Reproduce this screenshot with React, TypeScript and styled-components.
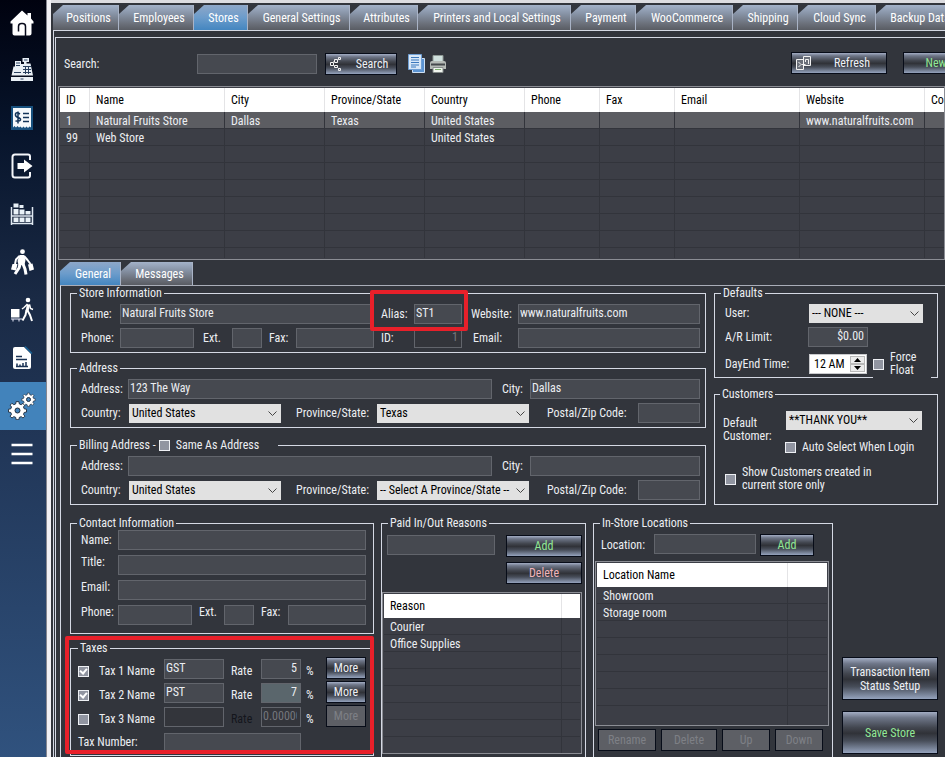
import React from "react";
import styled, { createGlobalStyle, css } from "styled-components";

const BG = "#32353c";
const FIELD = "#464950";
const FIELD_LINE = "#62656c";
const LINE = "#d5d9e4";
const LIST = "#3c3e46";
const LIST_LINE = "#32343b";
const TEXT = "#eceef2";
const FONT = '"Roboto Condensed", Roboto, "Liberation Sans", sans-serif';

const GlobalStyle = createGlobalStyle`
  * { box-sizing: border-box; }
  body { margin: 0; background: ${BG}; color: ${TEXT}; font: 12px/14px ${FONT}; overflow: hidden; }
  button, input, select { font: inherit; color: inherit; margin: 0; }
`;

/* ---------- shell ---------- */

const Page = styled.div`
  display: flex;
  height: 100vh;
  overflow: hidden;
`;

const Sidebar = styled.nav`
  flex: 0 0 51px;
  display: flex;
  flex-direction: column;
  background: linear-gradient(#00020f 0, #07142b 130px, #1a2a45 300px, #22385a 460px, #30527e 757px);
  border-right: 4px solid #f1f0f4;
  box-shadow: inset -1px 0 #85868f;
`;

const SideLink = styled.a<{ $active?: boolean; $first?: boolean }>`
  height: ${(p) => (p.$first ? 46 : 48)}px;
  width: 46px;
  padding-right: 2px;
  display: flex;
  align-items: center;
  justify-content: center;
  background: ${(p) => (p.$active ? "#4283bb" : "transparent")};
`;

const Main = styled.main`
  flex: 1;
  min-width: 0;
  display: flex;
  flex-direction: column;
  overflow: hidden;
  border-top: 3px solid #dcdce0;
  padding: 2px 0 0 2px;
`;

const TabBar = styled.div<{ $inner?: boolean }>`
  display: flex;
  flex: none;
  height: ${(p) => (p.$inner ? 23 : 25)}px;
  margin: ${(p) => (p.$inner ? "2px 0 0 4px" : "0")};
`;

const Tab = styled.button<{ $w: number; $active?: boolean }>`
  flex: 0 0 ${(p) => p.$w}px;
  min-width: 0;
  border: 0;
  border-right: 1px solid #a9b3c6;
  padding: 0 0 0 6px;
  color: #fff;
  white-space: nowrap;
  background: ${(p) =>
    p.$active
      ? "linear-gradient(#8ea7c8, #6c9ccb 50%, #4486c0)"
      : "linear-gradient(#a3b2c9, #8793a6 35%, #6b707a 75%, #595c63)"};
  clip-path: polygon(0 9px, 10px 0, 100% 0, 100% 100%, 0 100%);
`;

const OuterFrame = styled.div`
  flex: 1;
  border-left: 1px solid ${LINE};
  border-top: 1px solid ${LINE};
  padding: 6px 0 0 1px;
`;

const InnerFrame = styled.div`
  height: 100%;
  border-left: 1px solid ${LINE};
  border-top: 1px solid ${LINE};
`;

const Toolbar = styled.div`
  height: 48px;
  padding: 4px 0 0 8px;
  display: flex;
  align-items: center;
  > * {
    flex: none;
  }
`;

const ToolbarLabel = styled.label`
  width: 133px;
`;

const ToolGroup = styled.div<{ $gap: number }>`
  display: flex;
  align-items: center;
  margin-left: ${(p) => p.$gap}px;
`;

const IconButton = styled.button`
  border: 0;
  padding: 0;
  background: none;
  display: flex;
  margin-right: 4px;
`;

const RightTools = styled.div`
  display: flex;
  gap: 16px;
  margin: 0 0 2px 340px;
`;

/* ---------- controls ---------- */

const tones = { plain: "#eef0f5", green: "#92e896", red: "#f0b4ba" };

const Button = styled.button<{ $w?: number; $h?: number; $tone?: keyof typeof tones }>`
  flex: none;
  width: ${(p) => (p.$w ? p.$w + "px" : "100%")};
  height: ${(p) => p.$h ?? 22}px;
  padding: 0;
  display: flex;
  align-items: center;
  justify-content: center;
  border: 1px solid #070c18;
  color: ${(p) => tones[p.$tone ?? "plain"]};
  background: linear-gradient(#a3adc4 0, #6e7688 14%, #42464f 38%, #303238 52%, #474d59 70%, #95a3bd 100%);
  &:disabled {
    color: #7e8086;
    background: #5d5f65;
  }
`;

const ButtonIconText = styled.span`
  flex: 1;
  text-align: center;
  padding-left: 6px;
`;

const IconSlot = styled.span`
  display: flex;
  padding-left: 4px;
`;

const Field = styled.input<{ $w?: number; $align?: string; $hot?: boolean }>`
  width: ${(p) => (p.$w ? p.$w + "px" : "100%")};
  min-width: 0;
  height: 20px;
  padding: 0 3px 2px 1px;
  border: 1px solid ${FIELD_LINE};
  border-radius: 0;
  outline: 0;
  background: ${(p) => (p.$hot ? "#5a666c" : FIELD)};
  text-align: ${(p) => p.$align ?? "left"};
  &:disabled {
    background: #33353b;
    color: #75777d;
  }
`;

const SelectWrap = styled.span`
  position: relative;
  display: block;
  height: 19px;
  margin-left: 1px;
  svg {
    position: absolute;
    right: 4px;
    top: 6px;
    pointer-events: none;
  }
`;

const NativeSelect = styled.select`
  appearance: none;
  width: 100%;
  height: 19px;
  border: 0;
  border-radius: 0;
  padding: 0 14px 0 3px;
  background: #e1e1e1;
  color: #000;
`;

const Tick = styled.input`
  appearance: none;
  flex: none;
  width: 11px;
  height: 11px;
  border: 1px solid #eef0f4;
  background: #9195a1;
  &:checked::after {
    content: "";
    display: block;
    box-sizing: border-box;
    width: 5px;
    height: 7px;
    margin: 0 0 0 2px;
    border: solid #fff;
    border-width: 0 2px 2px 0;
    rotate: 40deg;
  }
`;

const TickLabel = styled.label<{ $gap?: number }>`
  display: inline-flex;
  align-items: center;
  gap: ${(p) => p.$gap ?? 6}px;
  line-height: 13px;
  white-space: nowrap;
`;

/* ---------- groups ---------- */

const Pane = styled.div`
  margin-left: 4px;
  border-left: 1px solid ${LINE};
  border-top: 1px solid #a9adb8;
  padding: 0 7px 0 9px;
`;

const Upper = styled.div`
  display: grid;
  grid-template-columns: minmax(0, 636fr) minmax(0, 224fr);
  gap: 8px;
  align-items: start;
`;

const Lower = styled.div`
  display: grid;
  grid-template-columns: minmax(0, 304fr) minmax(0, 205fr) minmax(0, 240fr) minmax(0, 98fr);
  gap: 7px;
  margin-top: 11px;
`;

const Stack = styled.div<{ $gap: number }>`
  display: flex;
  flex-direction: column;
  gap: ${(p) => p.$gap}px;
`;

const Group = styled.fieldset<{ $pad: string; $top?: number }>`
  position: relative;
  min-width: 0;
  margin: ${(p) => p.$top ?? 0}px 0 0;
  border: 1px solid ${LINE};
  padding: ${(p) => p.$pad};
`;

const Legend = styled.legend<{ $w?: number; $in?: number }>`
  height: 14px;
  margin-left: ${(p) => -(p.$in ?? 4)}px;
  width: ${(p) => (p.$w ? p.$w + "px" : "auto")};
  padding: 0 2px;
  display: flex;
  align-items: center;
  gap: 3px;
  white-space: nowrap;
`;

const Row = styled.div<{ $cols: string; $align?: string; $h?: number }>`
  display: grid;
  grid-template-columns: ${(p) => p.$cols};
  align-items: ${(p) => p.$align ?? "center"};
  min-height: ${(p) => p.$h ?? 20}px;
  & + & {
    margin-top: 4px;
  }
`;

const DayRow = styled(Row)`
  && {
    margin-top: 3px;
  }
`;

const LocationRow = styled(Row)`
  padding: 0 15px 0 6px;
  > label {
    padding-top: 4px;
  }
`;

const ContactRows = styled.div`
  display: grid;
  gap: 5px;
  ${Row} {
    margin-top: 0;
  }
`;

const Label = styled.label<{ $in?: number; $dim?: boolean }>`
  padding-left: ${(p) => p.$in ?? 0}px;
  white-space: nowrap;
  color: ${(p) => (p.$dim ? "#14161c" : "inherit")};
`;

const Highlight = styled.div<{ $box: string; $w?: number }>`
  position: absolute;
  inset: ${(p) => p.$box};
  width: ${(p) => (p.$w ? p.$w + "px" : "auto")};
  border: 4px solid #e8202a;
  border-radius: 2px;
  pointer-events: none;
`;

const TaxRow = styled.div`
  display: grid;
  grid-template-columns: 86px 60px 37px 40px 25px 40px;
  align-items: end;
  height: 22px;
  margin-bottom: 2px;
  > label, > span {
    padding-bottom: 1px;
  }
`;

const TaxNumberRow = styled(TaxRow)`
  grid-template-columns: 86px 137px;
  margin: 4px 0 0;
  > label {
    padding-bottom: 4px;
  }
`;

const Percent = styled.span`
  padding-left: 5px;
`;

const TimeBox = styled.span`
  display: flex;
  height: 20px;
  margin-left: 1px;
  background: #fff;
  color: #000;
  border: 1px solid #c9cacd;
`;

const TimeInput = styled.input`
  width: 40px;
  border: 0;
  outline: 0;
  background: none;
  padding: 0 0 0 4px;
`;

const Spinner = styled.span`
  display: grid;
  grid-template-rows: 1fr 1fr;
  width: 15px;
  margin: 1px 0;
`;

const SpinButton = styled.button`
  padding: 0;
  border: 1px solid #b9b9b9;
  background: #ececec;
  display: flex;
  align-items: center;
  justify-content: center;
`;

const ForceFloat = styled(TickLabel)`
  height: 28px;
  margin: 0 0 -1px 6px;
  background: ${BG};
  white-space: normal;
  align-self: start;
`;

const TwoLines = styled.span`
  width: 34px;
`;

const CustomerGrid = styled.div`
  display: grid;
  grid-template-columns: 62px 1fr;
  line-height: 13px;
  > label {
    padding-top: 6px;
  }
`;

const ShowCustomers = styled(TickLabel)`
  margin: 12px 0 12px 2px;
  white-space: normal;
  max-width: 160px;
`;

const ReasonEntry = styled.div`
  display: grid;
  grid-template-columns: 1fr 76px;
  column-gap: 11px;
  row-gap: 5px;
  padding: 0 3px 0 5px;
  > :last-child {
    grid-column: 2;
  }
`;

const ListActions = styled.div`
  display: flex;
  gap: 5px;
  padding: 3px 0 0 3px;
`;

const SideActions = styled.div`
  display: flex;
  flex-direction: column;
  gap: 11px;
  padding: 141px 0 0 2px;
`;

/* ---------- lists ---------- */

const ListBox = styled.div<{ $h: number; $m: string }>`
  height: ${(p) => p.$h}px;
  margin: ${(p) => p.$m};
  border: 1px solid #8b8d94;
  padding: 1px;
  background: ${LIST};
  overflow: hidden;
`;

const cell = css`
  white-space: nowrap;
  text-align: left;
  font-weight: normal;
`;

const List = styled.table<{ $min?: number }>`
  width: ${(p) => (p.$min ? `max(100%, ${p.$min}px)` : "100%")};
  table-layout: fixed;
  border-collapse: separate;
  border-spacing: 0;
  th {
    ${cell}
    height: 24px;
    padding: 0 6px;
    background: #fff;
    color: #000;
    border-right: 1px solid #e4e4e6;
  }
  td {
    ${cell}
    height: 17px;
    padding: 1px 6px 0;
    border-right: 1px solid ${LIST_LINE};
    border-bottom: 1px solid ${LIST_LINE};
  }
  tr > :last-child {
    border-right: 0;
  }
`;

const ListRow = styled.tr<{ $picked?: boolean }>`
  background: ${(p) => (p.$picked ? "#5c5d62" : "transparent")};
`;

const TailRow = styled.tr<{ $h: number }>`
  && td {
    height: ${(p) => p.$h}px;
    border-bottom: 0;
  }
`;

/* ---------- icons ---------- */

const Chevron = () => (
  <svg width="9" height="7" viewBox="0 0 9 7" fill="none" stroke="#444" aria-hidden>
    <path d="M0.5 1.5 L4.5 5.5 L8.5 1.5" />
  </svg>
);

const icons: Record<string, React.ReactNode> = {
  Home: (
    <>
      <path fill="#fff" d="M12 .5 17.500 5.500V3H21V8.500L23.500 11.500V13.500H21.500V23.500Q21.500 25.500 19.500 25.500H4.500Q2.500 25.500 2.500 23.500V13.500H.5V11.500Z" />
      <path d="M8.500 21.500V16.500Q8.500 13.500 11.500 13.500H12.500Q15.500 13.500 15.500 16.500V26" fill="none" stroke="#07091a" strokeWidth="1.500" />
    </>
  ),
  Register: (
    <>
      <path fill="#e9f0f6" d="M12.500 1h6.500v4h-2.500v1.500h4l2.500 12H1.500l2-9h1.500V4h6v3h3V5h-1.500z" />
      <path fill="#e9f0f6" d="M1 20h22v4H1z" />
      <path stroke="#2a4160" fill="none" d="M14 3h3.500M6 6h4M6 8.500h4M13 9.500h8M13 12.500h8M13 15.500h8M15.500 9v8M18.500 9v8M4 15.500h7M10.500 22h3" />
    </>
  ),
  Receipt: (
    <>
      <path fill="#17507e" d="M1 1h22v24H1z" />
      <path fill="#f4f8fb" d="M3 3h18v19.500l-1.500-1-1.500 1.500-1.500-1.500-1.500 1.500-1.500-1.500-1.500 1.500-1.500-1.500L9 22.500 7.500 21 6 22.500 4.500 21 3 22.500z" />
      <path fill="none" stroke="#123459" strokeWidth="1.500" d="M10 9Q6 6.500 5.500 9T8 12.500 10.500 15 5.500 16M8 6.500v12M13 8.500h6M13 12.500h6M13 16.500h6" />
    </>
  ),
  "Sign in": (
    <>
      <path fill="none" stroke="#f4f6fa" strokeWidth="2" d="M20 7V3.500Q20 1.500 18 1.500H5Q2.500 1.500 2.500 4V22Q2.500 24.500 5 24.500H18Q20 24.500 20 22.500V19" />
      <path fill="#fff" d="M7.500 10H14V6.500L22.500 13 14 19.500V16H7.500Z" />
    </>
  ),
  Inventory: (
    <>
      <path fill="none" stroke="#dfe8f1" strokeWidth="1.500" d="M1.500 6V24M22.500 6V24M1 15H23M1 22.500H23" />
      <path fill="#e9f1f8" d="M3.500 2.500h5v4h-5zM9.500 4h4v3h-4zM3.500 8h5v5.500h-5zM9.500 8.500h5v5h-5zM15.500 10h5v3.500h-5zM3.500 16.500h5V21h-5zM9.500 16.500h5V21h-5zM15.500 16.500h5V21h-5z" />
    </>
  ),
  Customers: (
    <>
      <circle cx="12.500" cy="2.700" r="2.400" fill="#fff" />
      <path fill="#fff" d="M9.500 6h4.500l1.500 5-1 5h-6l-1-4z" />
      <path fill="none" stroke="#fff" strokeWidth="2" strokeLinejoin="round" d="M9.500 7 6 10.500 5 15M14 7l3.500 4 3 4" />
      <path fill="none" stroke="#fff" strokeWidth="3" strokeLinejoin="round" d="M10 15.500 9 19 5 25M13 15l2 5 1 5.500" />
      <path fill="#fff" d="M2.500 15h5l-1.500 6.500-5-1zM18 15.500l4.500-1 1.500 6-4.500 1.500z" />
    </>
  ),
  Deliveries: (
    <>
      <circle cx="18" cy="3" r="2.300" fill="#fff" />
      <path fill="none" stroke="#fff" strokeWidth="3" strokeLinejoin="round" d="M18.500 7.500 17 14" />
      <path fill="none" stroke="#fff" strokeWidth="1.500" d="M17.500 7 14 10.500 12 12M19.500 7.500l1 4 2.500 1" />
      <path fill="none" stroke="#fff" strokeWidth="2" strokeLinejoin="round" d="M16.500 13 15.500 18 12.500 23.500M17.500 13.500l2.500 4.500 2 6" />
      <path fill="#fff" d="M1 12h8.500v8.500H1z" />
      <path stroke="#eef" fill="none" d="M1 22h11M3 22v2.500M9 22v2.500" />
    </>
  ),
  Reports: (
    <>
      <path fill="#fff" d="M5 2h9l7 7v13q0 2-2 2H5q-2 0-2-2V4q0-2 2-2z" />
      <path d="M15 1.500 22 8.500" stroke="#1a6396" strokeWidth="1.500" />
      <path fill="none" stroke="#1b3354" strokeWidth="1.500" d="M6 11.500h6M6 14.500h11M6 21.500h12M7 21v-2.500M10 21v-1.500M13 21v-3M16 21v-4" />
    </>
  ),
  Menu: <path stroke="#fff" strokeWidth="2.500" d="M1.500 4h21M1.500 13h21M1.500 22h21" />,
};

const GEAR =
  "M-1.500-8h3l.5 2.500 2 .8 2-1.500 2 2-1.500 2 .8 2 2.500.5v3l-2.500.5-.8 2 1.500 2-2 2-2-1.500-2 .8-.5 2.500h-3l-.5-2.500-2-.8-2 1.500-2-2 1.500-2-.8-2-2.500-.5v-3l2.500-.5.8-2-1.500-2 2-2 2 1.500 2-.8z";

const Gears = () => (
  <svg width="28" height="28" viewBox="0 0 28 28" aria-hidden>
    <g fill="#fff" stroke="#1f2c3c" strokeWidth="1">
      <path transform="translate(9.500 17) scale(.92)" d={GEAR} />
      <path transform="translate(20.500 6.500) scale(.68)" d={GEAR} />
    </g>
    <circle cx="9.500" cy="18.500" r="2.500" fill="#4283bb" stroke="#1f2c3c" />
    <circle cx="20.500" cy="7.500" r="2" fill="#4283bb" stroke="#1f2c3c" />
  </svg>
);

const SideIcon = ({ name }: { name: string }) =>
  name === "Settings" ? (
    <Gears />
  ) : (
    <svg width="24" height="26" viewBox="0 0 24 26" aria-hidden>
      {icons[name]}
    </svg>
  );

const TreeIcon = () => (
  <svg width="12" height="16" viewBox="0 0 12 16" fill="none" stroke="#f2f2f2" aria-hidden>
    <path d="M.5 6.500h3v3h-3zM4.500 3.500h3v3h-3zM8.500 1.500h2v2h-2zM4.500 9.500h3v2h-3zM8.500 12.500h2v2h-2zM3.500 6l1-1M3.500 9.500l1 1M7.500 4.500l1-1M7.500 11.500l1 1" />
  </svg>
);

const RefreshIcon = () => (
  <svg width="16" height="14" viewBox="0 0 16 14" fill="none" stroke="#f2f2f2" aria-hidden>
    <path d="M.5 3.500h7v10h-7zM7.500.5h7v9h-7z" fill="#6a6f79" />
    <path d="M2.500 6 5 8.500 2.500 11M9.500 6V3.500h3V8M5.500 8.500h4" />
  </svg>
);

const CopyIcon = () => (
  <svg width="17" height="20" viewBox="0 0 17 20" aria-hidden>
    <path d="M4.500 4.500h12v14h-12z" fill="#5c94d2" stroke="#cfe0f2" />
    <path d="M.5.5h13v15H.5z" fill="#d7e7f8" stroke="#6f9fd4" />
    <path d="M3 3.500h8M3 6h8M3 8.500h8M3 11h8M3 13h5" stroke="#3b78bd" />
  </svg>
);

const PrinterIcon = () => (
  <svg width="18" height="18" viewBox="0 0 18 18" aria-hidden>
    <path d="M4 .5h10V8H4z" fill="#cfe0dd" stroke="#8f9995" />
    <path d="M1 8q0-2 2-2h12q2 0 2 2v6H1z" fill="#b5bab6" />
    <path d="M2 9.500h14" stroke="#45494c" strokeWidth="2" />
    <path d="M4 12.500h10v5H4z" fill="#f1f5ef" stroke="#868c8b" />
    <path d="M6 14.500h6" stroke="#7bb26d" />
  </svg>
);

/* ---------- composed controls ---------- */

const Select = ({ id, value }: { id: string; value: string }) => (
  <SelectWrap>
    <NativeSelect id={id} defaultValue={value}>
      <option>{value}</option>
    </NativeSelect>
    <Chevron />
  </SelectWrap>
);

type FieldProps = React.ComponentProps<typeof Field> & { id: string; label: string; indent?: number };
const Labeled = ({ id, label, indent, ...rest }: FieldProps) => (
  <>
    <Label htmlFor={id} $in={indent}>{label}</Label>
    <Field id={id} {...rest} />
  </>
);

const times = (n: number) => Array.from({ length: n }, (_, i) => i);

const SmallList = ({ title, rows, blanks, tail, side }: { title: string; rows: string[]; blanks: number; tail: number; side: number }) => (
  <List>
    <colgroup>
      <col />
      <col style={{ width: side }} />
    </colgroup>
    <thead>
      <tr><th>{title}</th><th /></tr>
    </thead>
    <tbody>
      {rows.map((r) => <ListRow key={r}><td>{r}</td><td /></ListRow>)}
      {times(blanks).map((i) => <ListRow key={i}><td /><td /></ListRow>)}
      <TailRow $h={tail}><td /><td /></TailRow>
    </tbody>
  </List>
);

const AddressRows = ({ prefix, address, city, province }: { prefix: string; address?: string; city?: string; province: string }) => (
  <>
    <Row $cols="47px 364fr 38px 170fr">
      <Labeled id={prefix + "addr"} label="Address:" defaultValue={address} />
      <Labeled id={prefix + "city"} label="City:" indent={10} defaultValue={city} />
    </Row>
    <Row $cols="47px 153fr 95px 153fr 109px 62fr">
      <Label htmlFor={prefix + "country"}>Country:</Label>
      <Select id={prefix + "country"} value="United States" />
      <Label htmlFor={prefix + "prov"} $in={15}>Province/State:</Label>
      <Select id={prefix + "prov"} value={province} />
      <Labeled id={prefix + "zip"} label="Postal/Zip Code:" indent={18} />
    </Row>
  </>
);

const TaxLine = ({ n, name, rate, on, hot }: { n: number; name: string; rate: string; on?: boolean; hot?: boolean }) => (
  <TaxRow>
    <TickLabel $gap={10}>
      <Tick type="checkbox" defaultChecked={on} />
      Tax {n} Name
    </TickLabel>
    <Field aria-label={`Tax ${n} name`} defaultValue={name} disabled={!on} />
    <Label htmlFor={`rate${n}`} $in={7} $dim={!on}>Rate</Label>
    <Field id={`rate${n}`} defaultValue={rate} $align="right" $hot={hot} disabled={!on} />
    <Percent>%</Percent>
    <Button disabled={!on}>More</Button>
  </TaxRow>
);

/* ---------- data ---------- */

const tabs: [string, number][] = [
  ["Positions", 66], ["Employees", 75], ["Stores", 54], ["General Settings", 102], ["Attributes", 68],
  ["Printers and Local Settings", 153], ["Payment", 65], ["WooCommerce", 97], ["Shipping", 65],
  ["Cloud Sync", 78], ["Backup Database", 106],
];

const columns: [string, number | undefined][] = [
  ["ID", 30], ["Name", 135], ["City", 100], ["Province/State", 100], ["Country", 100],
  ["Phone", 75], ["Fax", 75], ["Email", 125], ["Website", 125], ["Contact", undefined],
];

const stores = [
  ["1", "Natural Fruits Store", "Dallas", "Texas", "United States", "", "", "", "www.naturalfruits.com", ""],
  ["99", "Web Store", "", "", "United States", "", "", "", "", ""],
];

const sideItems = ["Home", "Register", "Receipt", "Sign in", "Inventory", "Customers", "Deliveries", "Reports", "Settings", "Menu"];

export default function App() {
  return (
    <Page>
      <GlobalStyle />
      <Sidebar aria-label="Main">
        {sideItems.map((name, i) => (
          <SideLink key={name} href="#" aria-label={name} $first={i === 0} $active={name === "Settings"}>
            <SideIcon name={name} />
          </SideLink>
        ))}
      </Sidebar>
      <Main>
        <TabBar>
          {tabs.map(([name, w]) => (
            <Tab key={name} $w={w} $active={name === "Stores"}>{name}</Tab>
          ))}
        </TabBar>
        <OuterFrame>
          <InnerFrame>
            <Toolbar>
              <ToolbarLabel htmlFor="search">Search:</ToolbarLabel>
              <Field id="search" $w={120} />
              <ToolGroup $gap={8}>
                <Button $w={72}>
                  <IconSlot><TreeIcon /></IconSlot>
                  <ButtonIconText>Search</ButtonIconText>
                </Button>
              </ToolGroup>
              <ToolGroup $gap={11}>
                <IconButton aria-label="Copy list"><CopyIcon /></IconButton>
                <IconButton aria-label="Print list"><PrinterIcon /></IconButton>
              </ToolGroup>
              <RightTools>
                <Button $w={96}>
                  <IconSlot><RefreshIcon /></IconSlot>
                  <ButtonIconText>Refresh</ButtonIconText>
                </Button>
                <Button $w={66} $tone="green">New</Button>
              </RightTools>
            </Toolbar>

            <ListBox $h={174} $m="0 0 0 2px">
              <List $min={990}>
                <colgroup>
                  {columns.map(([name, w]) => <col key={name} style={{ width: w }} />)}
                </colgroup>
                <thead>
                  <tr>{columns.map(([name]) => <th key={name}>{name}</th>)}</tr>
                </thead>
                <tbody>
                  {stores.map((row, i) => (
                    <ListRow key={i} $picked={i === 0}>{row.map((v, j) => <td key={j}>{v}</td>)}</ListRow>
                  ))}
                  {times(6).map((i) => <ListRow key={i}>{columns.map(([n]) => <td key={n} />)}</ListRow>)}
                  <TailRow $h={10}>{columns.map(([n]) => <td key={n} />)}</TailRow>
                </tbody>
              </List>
            </ListBox>

            <TabBar $inner>
              <Tab $w={61} $active>General</Tab>
              <Tab $w={72}>Messages</Tab>
            </TabBar>

            <Pane>
              <Upper>
                <div>
                  <Group $pad="4px 5px 4px 10px">
                    <Legend>Store Information</Legend>
                    <Row $cols="39px 1fr 41px 48px 56px 182px">
                      <Labeled id="name" label="Name:" defaultValue="Natural Fruits Store" />
                      <Labeled id="alias" label="Alias:" indent={8} defaultValue="ST1" />
                      <Labeled id="web" label="Website:" indent={9} defaultValue="www.naturalfruits.com" />
                    </Row>
                    <Row $cols="39px 74px 38px 30px 34px 1fr 40px 48px 56px 182px">
                      <Labeled id="phone" label="Phone:" />
                      <Labeled id="ext" label="Ext." indent={9} />
                      <Labeled id="fax" label="Fax:" indent={7} />
                      <Labeled id="sid" label="ID:" indent={7} defaultValue="1" $align="right" disabled />
                      <Labeled id="email" label="Email:" indent={11} />
                    </Row>
                    <Highlight $box="-10px 237px 21px auto" $w={98} />
                  </Group>
                  <Group $pad="4px 5px 4px 10px" $top={8}>
                    <Legend>Address</Legend>
                    <AddressRows prefix="a" address="123 The Way" city="Dallas" province="Texas" />
                  </Group>
                  <Group $pad="4px 5px 4px 10px" $top={10}>
                    <Legend $w={201}>
                      Billing Address -
                      <TickLabel>
                        <Tick type="checkbox" />
                        Same As Address
                      </TickLabel>
                    </Legend>
                    <AddressRows prefix="b" province="-- Select A Province/State --" />
                  </Group>
                </div>
                <div>
                  <Group $pad="3px 6px 0 10px">
                    <Legend>Defaults</Legend>
                    <Row $cols="83px 1fr 8px">
                      <Label htmlFor="user">User:</Label>
                      <Select id="user" value="--- NONE ---" />
                    </Row>
                    <Row $cols="83px 60px">
                      <Labeled id="limit" label="A/R Limit:" defaultValue="$0.00" $align="right" />
                    </Row>
                    <DayRow $cols="83px 59px 1fr" $h={26}>
                      <Label htmlFor="dayend">DayEnd Time:</Label>
                      <TimeBox>
                        <TimeInput id="dayend" defaultValue="12 AM" />
                        <Spinner>
                          <SpinButton aria-label="Later"><svg width="7" height="4"><path d="M0 4 3.500 0 7 4z" /></svg></SpinButton>
                          <SpinButton aria-label="Earlier"><svg width="7" height="4"><path d="M0 0 3.500 4 7 0z" /></svg></SpinButton>
                        </Spinner>
                      </TimeBox>
                      <ForceFloat>
                        <Tick type="checkbox" />
                        <TwoLines>Force Float</TwoLines>
                      </ForceFloat>
                    </DayRow>
                  </Group>
                  <Group $pad="10px 15px 0 8px" $top={9}>
                    <Legend $in={3}>Customers</Legend>
                    <CustomerGrid>
                      <label htmlFor="customer">Default Customer:</label>
                      <Stack $gap={11}>
                        <Select id="customer" value="**THANK YOU**" />
                        <TickLabel>
                          <Tick type="checkbox" />
                          Auto Select When Login
                        </TickLabel>
                      </Stack>
                    </CustomerGrid>
                    <ShowCustomers>
                      <Tick type="checkbox" />
                      Show Customers created in current store only
                    </ShowCustomers>
                  </Group>
                </div>
              </Upper>

              <Lower>
                <div>
                  <Group $pad="0 7px 8px 10px">
                    <Legend>Contact Information</Legend>
                    <ContactRows>
                      <Row $cols="37px 1fr"><Labeled id="cname" label="Name:" /></Row>
                      <Row $cols="37px 1fr" $align="start"><Labeled id="ctitle" label="Title:" /></Row>
                      <Row $cols="37px 1fr" $align="start"><Labeled id="cemail" label="Email:" /></Row>
                      <Row $cols="37px 74px 32px 30px 34px 1fr" $align="start">
                        <Labeled id="cphone" label="Phone:" />
                        <Labeled id="cext" label="Ext." indent={7} />
                        <Labeled id="cfax" label="Fax:" indent={7} />
                      </Row>
                    </ContactRows>
                  </Group>
                  <Group $pad="2px 0 2px 7px" $top={7}>
                    <Legend $in={0}>Taxes</Legend>
                    <TaxLine n={1} name="GST" rate="5" on />
                    <TaxLine n={2} name="PST" rate="7" on hot />
                    <TaxLine n={3} name="" rate="0.00000" />
                    <TaxNumberRow>
                      <label htmlFor="taxno">Tax Number:</label>
                      <Field id="taxno" />
                    </TaxNumberRow>
                    <Highlight $box="-19px -1px 1px -6px" />
                  </Group>
                </div>

                <Group $pad="5px 0 6px 0">
                  <Legend $in={-6}>Paid In/Out Reasons</Legend>
                  <ReasonEntry>
                    <Field aria-label="Reason" />
                    <Button $tone="green">Add</Button>
                    <Button $tone="red">Delete</Button>
                  </ReasonEntry>
                  <ListBox $h={162} $m="8px 3px 0 0">
                    <SmallList title="Reason" rows={["Courier", "Office Supplies"]} blanks={5} tail={17} side={18} />
                  </ListBox>
                </Group>

                <Group $pad="4px 3px 6px 1px">
                  <Legend $in={-5}>In-Store Locations</Legend>
                  <LocationRow $cols="53px 1fr 4px 54px" $align="start" $h={22}>
                    <Labeled id="loc" label="Location:" />
                    <span />
                    <Button $tone="green">Add</Button>
                  </LocationRow>
                  <ListBox $h={165} $m="5px 0 0 0">
                    <SmallList title="Location Name" rows={["Showroom", "Storage room"]} blanks={5} tail={20} side={39} />
                  </ListBox>
                  <ListActions>
                    <Button $w={58} disabled>Rename</Button>
                    <Button $w={56} disabled>Delete</Button>
                    <Button $w={48} disabled>Up</Button>
                    <Button $w={48} disabled>Down</Button>
                  </ListActions>
                </Group>

                <SideActions>
                  <Button $h={43}>Transaction Item Status Setup</Button>
                  <Button $h={43} $tone="green">Save Store</Button>
                </SideActions>
              </Lower>
            </Pane>
          </InnerFrame>
        </OuterFrame>
      </Main>
    </Page>
  );
}
